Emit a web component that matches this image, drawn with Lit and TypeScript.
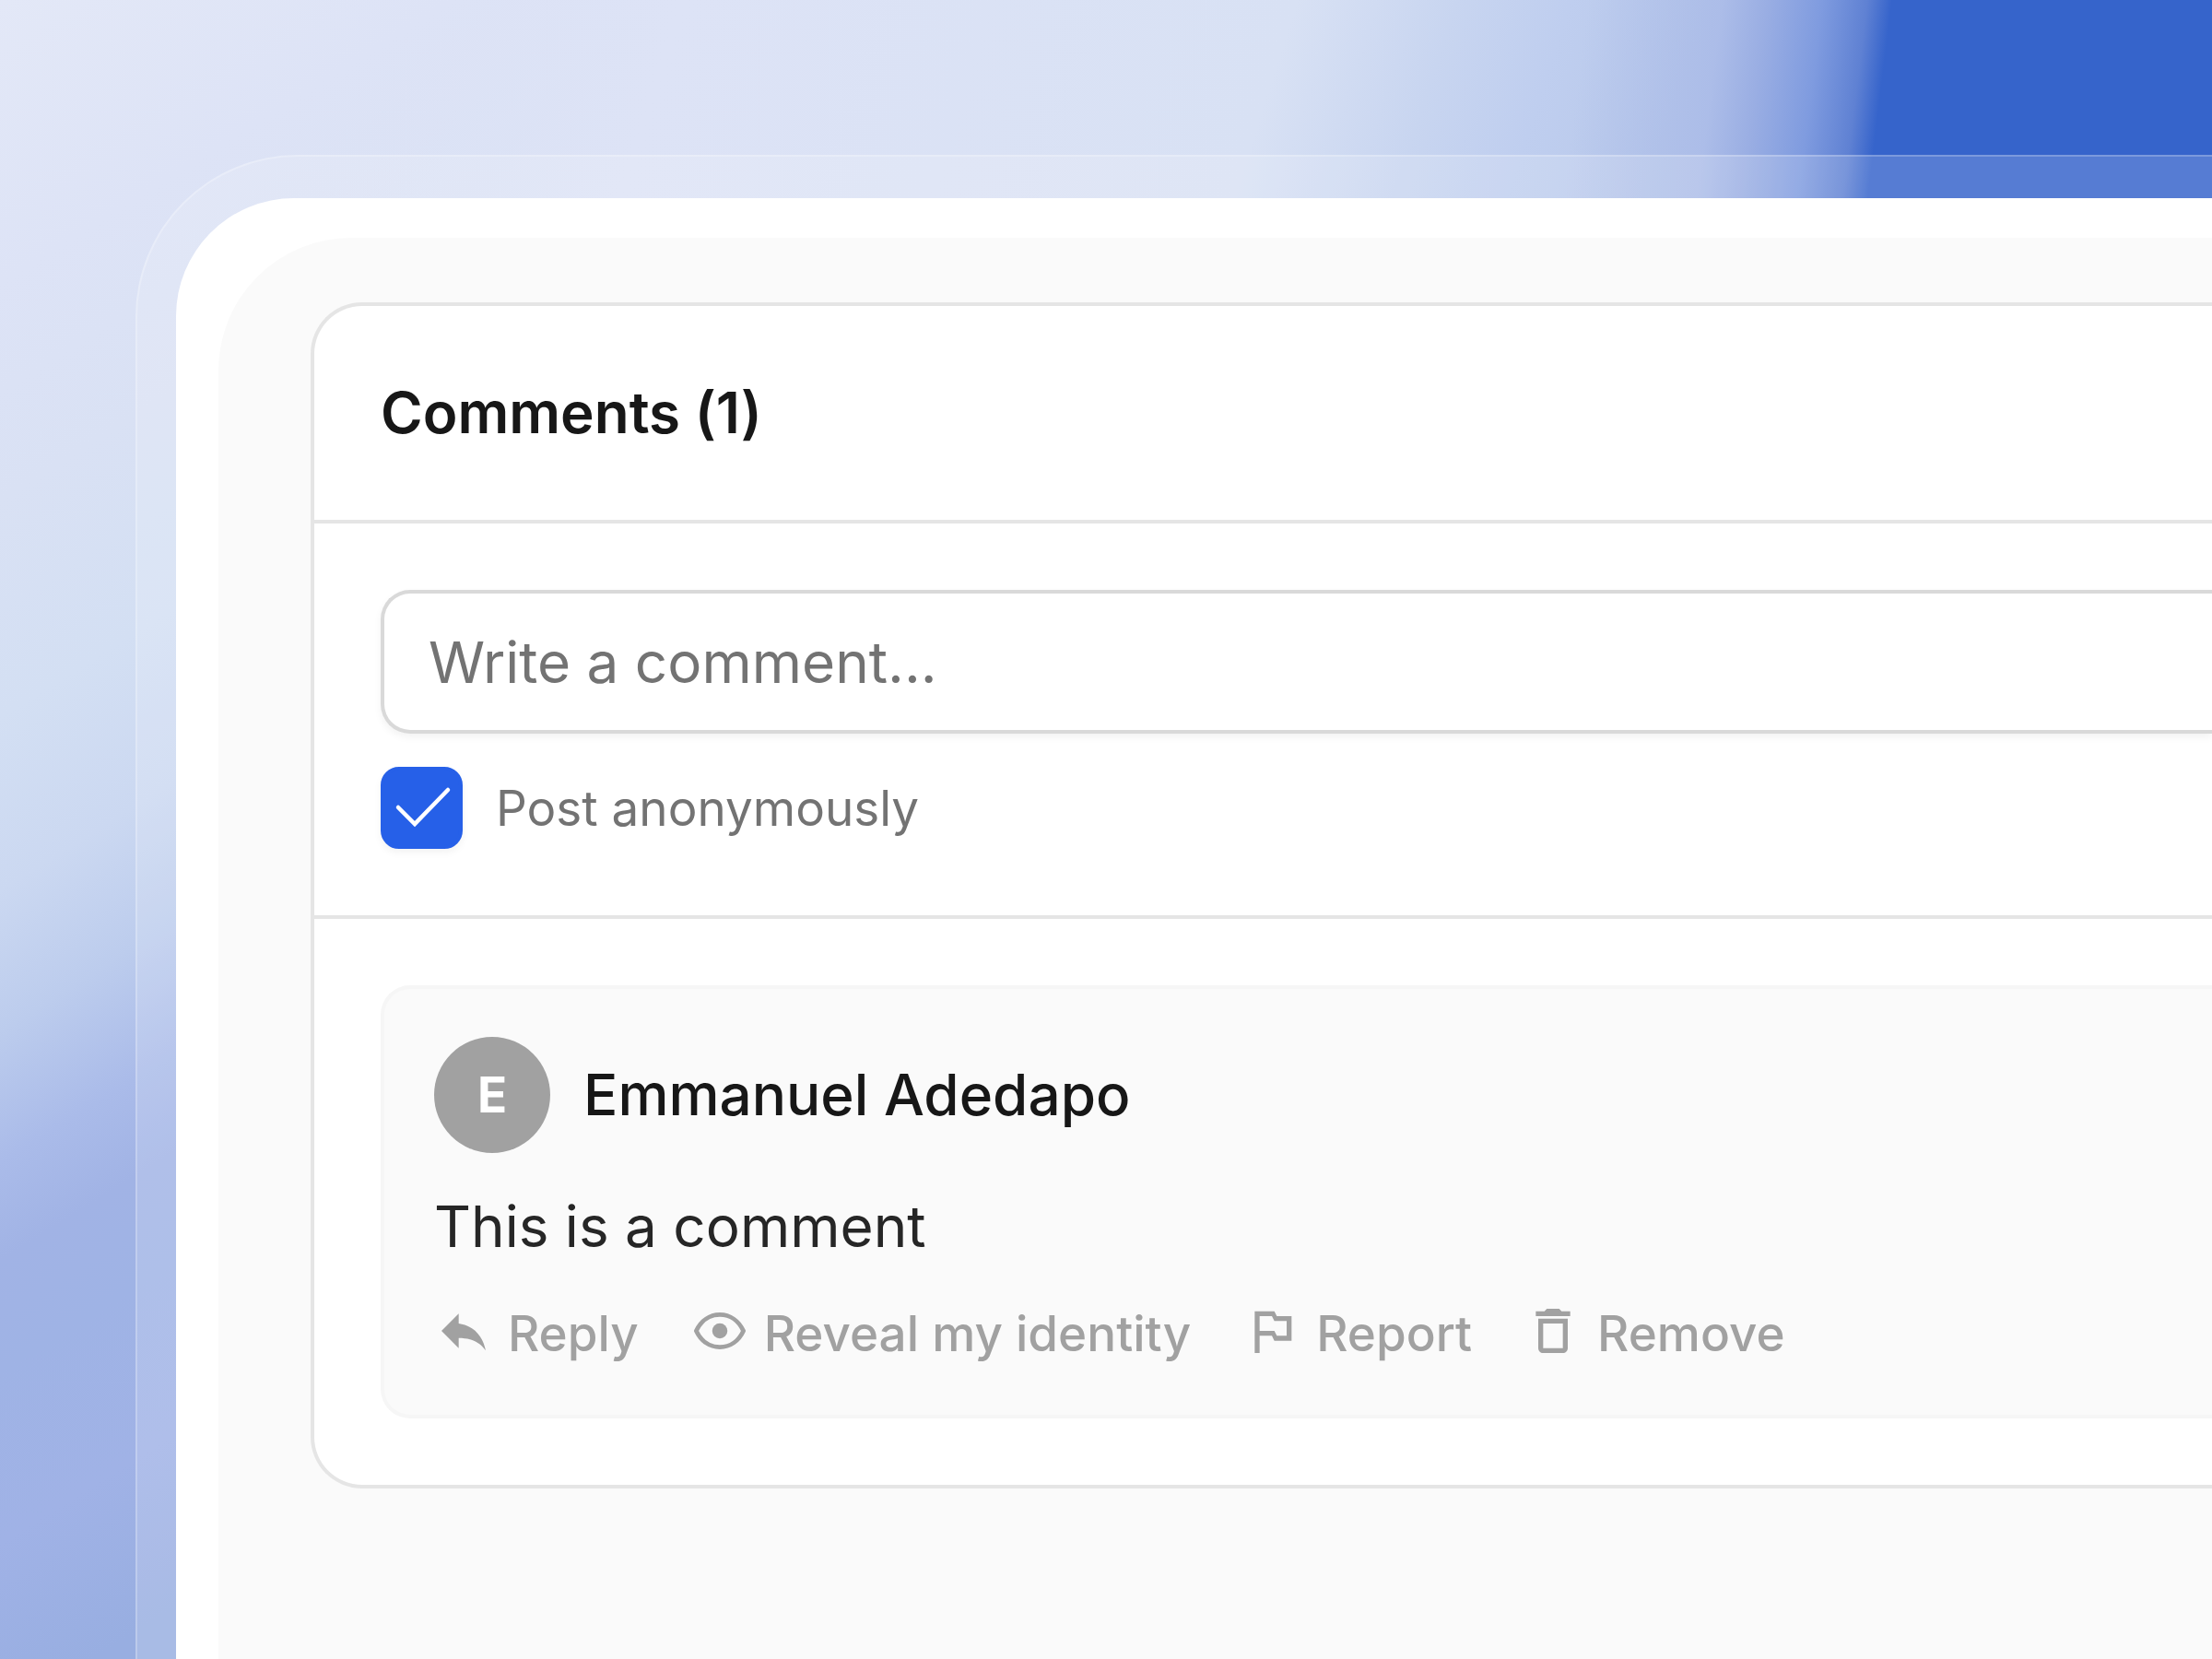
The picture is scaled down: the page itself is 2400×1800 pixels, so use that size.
import { LitElement, html, css, svg } from "lit";
import { customElement, property, state } from "lit/decorators.js";

const icons = {
  reply: svg`<path d="M10 9V5l-7 7 7 7v-4.100c5 0 8.500 1.600 11 5.100-1-5-4-10-11-11z" fill="currentColor"/>`,
  eye: svg`<path d="M2.400 12C4.300 7.900 7.800 5.400 12 5.400S19.700 7.900 21.600 12C19.700 16.100 16.200 18.600 12 18.600S4.300 16.100 2.400 12z" fill="none" stroke="currentColor" stroke-width="1.800" stroke-linejoin="round"/><circle cx="12" cy="12" r="3.100" fill="currentColor"/>`,
  flag: svg`<path d="M14 6l-1-2H5v17h2v-7h5l1 2h7V6h-6zm4 8h-4l-1-2H7V6h5l1 2h5v6z" fill="currentColor"/>`,
  trash: svg`<path d="M6 19c0 1.100.9 2 2 2h8c1.100 0 2-.9 2-2V7H6v12zM8 9h8v10H8V9zm7.500-5l-1-1h-5l-1 1H5v2h14V4h-3.500z" fill="currentColor"/>`,
};

type IconName = keyof typeof icons;

const actions: { icon: IconName; label: string }[] = [
  { icon: "reply", label: "Reply" },
  { icon: "eye", label: "Reveal my identity" },
  { icon: "flag", label: "Report" },
  { icon: "trash", label: "Remove" },
];

@customElement("comment-item")
export class CommentItem extends LitElement {
  @property() author = "";
  @property() text = "";

  static styles = css`
    :host {
      display: block;
    }
    .item {
      display: flex;
      flex-direction: column;
      gap: 36px;
      padding: 52px 54px;
      border: 4px solid #f6f6f6;
      border-right: 0;
      border-radius: 32px 0 0 32px;
      background: #fafafa;
    }
    .author {
      display: flex;
      align-items: center;
      gap: 36px;
    }
    .avatar {
      display: flex;
      align-items: center;
      justify-content: center;
      width: 126px;
      height: 126px;
      border-radius: 50%;
      background: #a1a1a1;
      color: #fff;
      font-size: 53px;
      font-weight: 700;
    }
    .name {
      margin: 0;
      font-size: 62px;
      line-height: 88px;
      font-weight: 500;
      color: #171717;
    }
    .text {
      margin: 0;
      font-size: 62px;
      line-height: 88px;
      color: #262626;
    }
    .actions {
      display: flex;
      gap: 56px;
    }
    .action {
      display: flex;
      align-items: center;
      gap: 16px;
      padding: 0;
      border: 0;
      background: none;
      color: #a1a1a1;
      font: inherit;
      font-size: 53px;
      line-height: 72px;
      font-weight: 500;
      white-space: nowrap;
      cursor: pointer;
    }
    .icon {
      width: 64px;
      height: 64px;
      margin-bottom: 6px;
    }
  `;

  render() {
    return html`
      <article class="item">
        <header class="author">
          <span class="avatar" aria-hidden="true">${this.author.charAt(0)}</span>
          <h3 class="name">${this.author}</h3>
        </header>
        <p class="text">${this.text}</p>
        <div class="actions">
          ${actions.map(
            (a) => html`<button class="action" type="button">
              <svg class="icon" viewBox="0 0 24 24" aria-hidden="true">${icons[a.icon]}</svg>
              <span>${a.label}</span>
            </button>`
          )}
        </div>
      </article>
    `;
  }
}

@customElement("app-root")
export class AppRoot extends LitElement {
  @state() private anonymous = true;
  @state() private comments = [
    { author: "Emmanuel Adedapo", text: "This is a comment" },
  ];

  static styles = css`
    :host {
      display: flex;
      box-sizing: border-box;
      min-height: 100vh;
      padding: 168px 0 0 147px;
      overflow: hidden;
      font-family: Inter, "Liberation Sans", sans-serif;
      font-optical-sizing: none;
      font-variant-ligatures: no-contextual;
      background:
        linear-gradient(97deg, transparent 71%, #a9bae8cc 77%, #9aaee3 79%, #7f9bdf 81.5%, #5f81d3 83.5%, #3664cb 84.6%) 0 0 / 100% 216px no-repeat,
        linear-gradient(108deg, transparent 14%, #dde3f6 30%, #d8e1f4 57%, #c8d5f0 64%, #bfceef 69%, #b8c8ea 75%) 0 0 / 100% 216px no-repeat,
        linear-gradient(148deg, #e3e8f7 0, #dde3f6 260px, #d9e1f4 460px, #d3dff3 660px, #cbd8f1 820px, #bccced 950px, #aabbe9 1070px, #a1b3e5 1160px, #9fb3e5 1260px, #a0b2e6 1420px, #98aee1 1580px);
    }
    .glass {
      display: flex;
      flex: 1;
      padding: 45px 0 0 42px;
      border: 2px solid #ffffff59;
      border-right: 0;
      border-bottom: 0;
      border-radius: 176px 0 0 0;
      background: #ffffff29;
      background-clip: padding-box;
    }
    .frame {
      display: flex;
      flex: 1;
      min-width: 0;
      padding: 43px 0 0 46px;
      border-radius: 128px 0 0 0;
      background: #fff;
    }
    .page {
      flex: 1;
      min-width: 0;
      padding: 70px 0 0 100px;
      border-radius: 144px 0 0 0;
      background: #fafafa;
    }
    .card {
      border: 4px solid #e5e5e5;
      border-right: 0;
      border-radius: 56px 0 0 56px;
      background: #fff;
    }
    .head {
      padding: 72px;
      border-bottom: 4px solid #e5e5e5;
    }
    .title {
      margin: 0;
      font-size: 62px;
      line-height: 88px;
      font-weight: 600;
      color: #171717;
    }
    .compose {
      display: flex;
      flex-direction: column;
      gap: 36px;
      padding: 72px 0 72px 72px;
      border-bottom: 4px solid #e5e5e5;
    }
    .field {
      box-sizing: border-box;
      width: 100%;
      height: 156px;
      padding: 0 48px;
      border: 4px solid #d9d9d9;
      border-right: 0;
      border-radius: 32px 0 0 32px;
      background: #fff;
      box-shadow: 0 4px 8px #0000000d;
      color: #171717;
      font: inherit;
      font-size: 62px;
      outline: none;
    }
    .field::placeholder {
      color: #737373;
      opacity: 1;
    }
    .option {
      display: flex;
      align-items: center;
      align-self: start;
      gap: 36px;
      color: #737373;
      font-size: 53px;
      line-height: 72px;
    }
    .tick {
      display: grid;
      width: 89px;
      height: 89px;
    }
    .box,
    .mark {
      grid-area: 1 / 1;
      width: 100%;
      height: 100%;
    }
    .box {
      appearance: none;
      box-sizing: border-box;
      margin: 0;
      border: 4px solid #d9d9d9;
      border-radius: 20px;
      background: #fff;
      box-shadow: 0 4px 8px #0000000d;
    }
    .box:checked {
      border-color: #2660e8;
      background: #2660e8;
    }
    .mark {
      pointer-events: none;
    }
    .list {
      display: flex;
      flex-direction: column;
      gap: 36px;
      padding: 72px 0 72px 72px;
    }
  `;

  private toggle(e: Event) {
    this.anonymous = (e.target as HTMLInputElement).checked;
  }

  render() {
    return html`
      <div class="glass">
        <div class="frame">
          <main class="page">
            <section class="card">
              <header class="head">
                <h2 class="title">Comments (${this.comments.length})</h2>
              </header>
              <form class="compose">
                <input class="field" type="text" aria-label="Write a comment" placeholder="Write a comment..." />
                <label class="option" for="anonymous">
                  <span class="tick">
                    <input class="box" id="anonymous" type="checkbox" .checked=${this.anonymous} @change=${this.toggle} />
                    <svg class="mark" viewBox="0 0 89 89" aria-hidden="true">
                      <path d="M19 44l18 18 36-37" fill="none" stroke="#fff" stroke-width="4.500" stroke-linecap="round" stroke-linejoin="miter" />
                    </svg>
                  </span>
                  <span>Post anonymously</span>
                </label>
              </form>
              <div class="list">
                ${this.comments.map(
                  (c) => html`<comment-item .author=${c.author} .text=${c.text}></comment-item>`
                )}
              </div>
            </section>
          </main>
        </div>
      </div>
    `;
  }
}
